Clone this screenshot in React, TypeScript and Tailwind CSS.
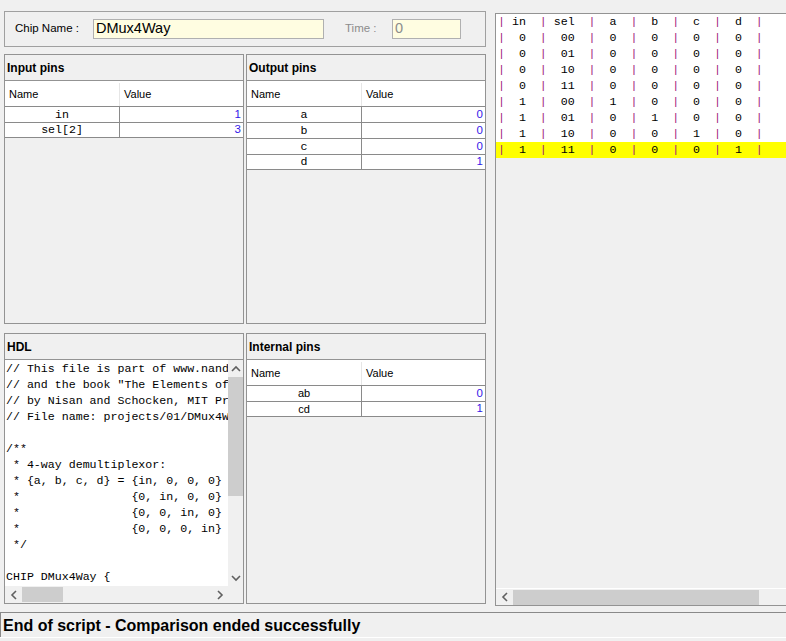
import React from "react";

const HDL_LINES = [
  "// This file is part of www.nand2tetris.org",
  '// and the book "The Elements of Computing Systems"',
  "// by Nisan and Schocken, MIT Press.",
  "// File name: projects/01/DMux4Way.hdl",
  "",
  "/**",
  " * 4-way demultiplexor:",
  " * {a, b, c, d} = {in, 0, 0, 0} if sel == 00",
  " *                {0, in, 0, 0} if sel == 01",
  " *                {0, 0, in, 0} if sel == 10",
  " *                {0, 0, 0, in} if sel == 11",
  " */",
  "",
  "CHIP DMux4Way {",
];

const OUT_ROWS = [
  ["in", "sel", "a", "b", "c", "d"],
  ["0", "00", "0", "0", "0", "0"],
  ["0", "01", "0", "0", "0", "0"],
  ["0", "10", "0", "0", "0", "0"],
  ["0", "11", "0", "0", "0", "0"],
  ["1", "00", "1", "0", "0", "0"],
  ["1", "01", "0", "1", "0", "0"],
  ["1", "10", "0", "0", "1", "0"],
  ["1", "11", "0", "0", "0", "1"],
];

const WIDTHS = [5, 6, 5, 5, 5, 5];

// centre a value in a fixed number of monospace columns
function pad(text: string, width: number) {
  const left = Math.floor((width - text.length) / 2);
  return " ".repeat(left) + text + " ".repeat(width - left - text.length);
}

function Chevron({ dir }: { dir: "up" | "down" | "left" | "right" }) {
  const pts = {
    up: "1,6 5,2 9,6",
    down: "1,2 5,6 9,2",
    left: "6,1 2,5 6,9",
    right: "2,1 6,5 2,9",
  }[dir];
  const vertical = dir === "up" || dir === "down";
  return (
    <svg width={vertical ? 10 : 8} height={vertical ? 8 : 10} viewBox={vertical ? "0 0 10 8" : "0 0 8 10"}>
      <polyline points={pts} fill="none" stroke="#606060" strokeWidth="1.6" />
    </svg>
  );
}

function Panel({ title, children }: { title: string; children: React.ReactNode }) {
  return (
    <div className="flex flex-col border border-[#939393] overflow-hidden">
      <div className="h-[26px] shrink-0 flex items-center pl-[2px] font-bold text-[12px] text-black border-b border-[#939393]">
        {title}
      </div>
      {children}
    </div>
  );
}

function PinTable({ rows, mono }: { rows: [string, string][]; mono: boolean }) {
  return (
    <div className="flex flex-col">
      <div className="flex h-[25px] pt-[2px] bg-white text-[11px] text-black">
        <div className="w-[115px] border-r border-[#e6e6e6] pl-[4px] flex items-center">Name</div>
        <div className="flex-1 pl-[4px] flex items-center">Value</div>
      </div>
      {rows.map(([n, v], i) => (
        <div
          key={n}
          className={`flex h-[16px] bg-white border-t border-[#8a8a8a] ${i === rows.length - 1 ? "border-b" : ""}`}
        >
          <div
            className={`w-[115px] border-r border-[#8a8a8a] flex items-center justify-center text-black ${
              mono ? "font-['Liberation_Mono',monospace] text-[11.6px]" : "text-[11px]"
            }`}
          >
            {n}
          </div>
          <div className="flex-1 flex items-center justify-end pr-[2px] text-[11.5px] text-[#3318e8]">{v}</div>
        </div>
      ))}
    </div>
  );
}

export default function App() {
  return (
    <div className="w-[786px] h-[641px] bg-[#f0f0f0] flex flex-col overflow-hidden font-['Liberation_Sans',Arial,sans-serif] text-black">
      <div className="flex h-[612px] pt-[11px] shrink-0">
        {/* left column */}
        <div className="ml-[4px] w-[482px] flex flex-col">
          <div className="h-[36px] border border-[#a0a0a0] flex items-center">
            <span className="ml-[10px] w-[78px] text-[11.5px]">Chip Name :</span>
            <div className="w-[231px] h-[20px] border border-[#b0b0b0] bg-[#fffde1] flex items-center pl-[2px] text-[14.5px]">
              DMux4Way
            </div>
            <span className="ml-[21px] w-[47px] text-[11.5px] text-[#8c8c8c]">Time :</span>
            <div className="w-[69px] h-[20px] border border-[#b0b0b0] bg-[#fffde1] flex items-center pl-[2px] text-[14.5px] text-[#8c8c8c]">
              0
            </div>
          </div>

          <div className="mt-[7px] grid grid-cols-2 grid-rows-[270px_271px] gap-x-[2px] gap-y-[9px]">
            <Panel title="Input pins">
              <PinTable mono rows={[["in", "1"], ["sel[2]", "3"]]} />
            </Panel>
            <Panel title="Output pins">
              <PinTable mono rows={[["a", "0"], ["b", "0"], ["c", "0"], ["d", "1"]]} />
            </Panel>

            <Panel title="HDL">
              <div className="flex flex-1 min-h-0">
                <div className="flex-1 bg-white overflow-hidden whitespace-pre font-['Liberation_Mono',monospace] text-[11.62px] leading-[16px] pl-[1px] pt-[1px]">
                  {HDL_LINES.map((l, i) => (
                    <div key={i} className="h-[16px]">
                      {l}
                    </div>
                  ))}
                </div>
                <div className="w-[15px] bg-[#f0f0f0] flex flex-col items-center">
                  <div className="h-[17px] flex items-center justify-center">
                    <Chevron dir="up" />
                  </div>
                  <div className="w-full h-[119px] bg-[#cdcdcd]" />
                  <div className="flex-1" />
                  <div className="h-[17px] flex items-center justify-center">
                    <Chevron dir="down" />
                  </div>
                </div>
              </div>
              <div className="h-[17px] flex shrink-0">
                <div className="flex-1 flex items-center bg-[#f0f0f0]">
                  <div className="w-[17px] flex justify-center">
                    <Chevron dir="left" />
                  </div>
                  <div className="w-[41px] h-[15px] bg-[#cdcdcd]" />
                  <div className="flex-1" />
                  <div className="w-[17px] flex justify-center">
                    <Chevron dir="right" />
                  </div>
                </div>
                <div className="w-[15px] bg-[#f0f0f0]" />
              </div>
            </Panel>
            <Panel title="Internal pins">
              <PinTable mono={false} rows={[["ab", "0"], ["cd", "1"]]} />
            </Panel>
          </div>
        </div>

        {/* right column: comparison output */}
        <div className="ml-[9px] mt-[2px] flex-1 h-[593px] border-l border-t border-b border-[#939393] flex flex-col">
          <div className="bg-white">
            {OUT_ROWS.map((r, i) => (
              <div
                key={i}
                className={`h-[16px] pl-[2px] flex items-center whitespace-pre font-['Liberation_Mono',monospace] text-[11.62px] ${
                  i === OUT_ROWS.length - 1 ? "bg-[#ffff00]" : ""
                }`}
              >
                {r.map((c, j) => (
                  <React.Fragment key={j}>
                    <span className="text-[#a0207a]">|</span>
                    <span>{pad(c, WIDTHS[j])}</span>
                  </React.Fragment>
                ))}
                <span className="text-[#a0207a]">|</span>
              </div>
            ))}
          </div>
          <div className="flex-1" />
          <div className="h-[17px] border-t border-white flex items-center">
            <div className="w-[17px] flex justify-center">
              <Chevron dir="left" />
            </div>
            <div className="w-[246px] h-[15px] bg-[#cdcdcd]" />
          </div>
        </div>
      </div>

      {/* status bar */}
      <div className="h-[25px] shrink-0 border-t border-[#8a8a8a] border-l flex items-center pl-[2px] pt-[2px] font-bold text-[16px]">
        End of script - Comparison ended successfully
      </div>
      <div className="h-[1px] bg-white" />
    </div>
  );
}
